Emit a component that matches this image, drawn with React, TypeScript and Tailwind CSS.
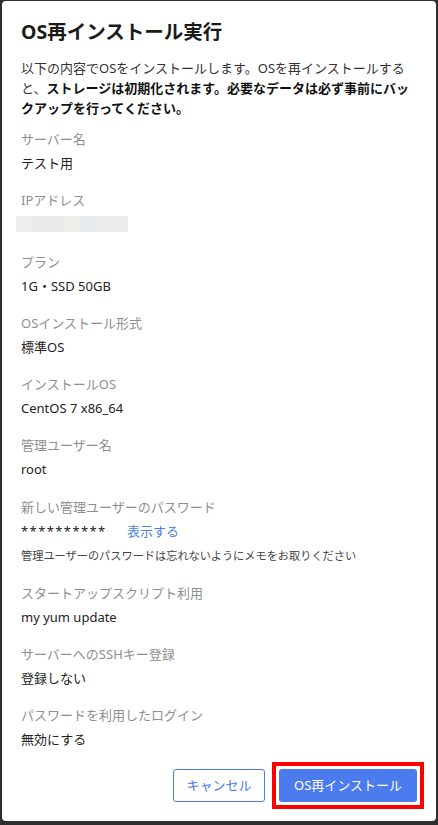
// App.tsx
// OS reinstall confirmation dialog: summary of settings plus cancel / confirm buttons.

type Row = {
    label: string;
    value?: string;
};

const rowsTop: Row[] = [
    { label: "サーバー名", value: "テスト用" },
    { label: "IPアドレス" },
    { label: "プラン", value: "1G・SSD 50GB" },
    { label: "OSインストール形式", value: "標準OS" },
    { label: "インストールOS", value: "CentOS 7 x86_64" },
    { label: "管理ユーザー名", value: "root" },
];

const rowsBottom: Row[] = [
    { label: "スタートアップスクリプト利用", value: "my yum update" },
    { label: "サーバーへのSSHキー登録", value: "登録しない" },
    { label: "パスワードを利用したログイン", value: "無効にする" },
];

// Blurred-out IP address placeholder
function MaskedValue() {
    return (
        <div className="flex h-5 items-center -ml-[5px]">
            <div className="flex h-4">
                <div className="w-4 bg-[#efefef]" />
                <div className="w-[31px] bg-[#eaeaea]" />
                <div className="w-[17px] bg-[#eeeeec]" />
                <div className="w-4 bg-[#e8e9ec]" />
                <div className="w-8 bg-[#ececec]" />
            </div>
        </div>
    );
}

function Field({ row }: { row: Row }) {
    return (
        <div className="mb-[17.3px]">
            <div className="text-[13px] leading-5 text-[#8f8f8f] mb-1">{row.label}</div>
            {row.value ? (
                <div className="text-[13px] leading-5 text-[#222]">{row.value}</div>
            ) : (
                <MaskedValue />
            )}
        </div>
    );
}

export default function App() {
    return (
        <div
            className="w-[438px] h-[825px] bg-[#2e2e2e] pt-px pb-1 px-[2px]"
            style={{ fontFamily: '"Noto Sans", "Noto Sans CJK JP", sans-serif' }}
        >
            <div className="h-full bg-white rounded-[4px] px-[19px] pt-[17px] flex flex-col">
                {/* Title */}
                <h1 className="text-[19.5px] leading-7 font-bold text-[#1a1a1a]">OS再インストール実行</h1>

                {/* Description */}
                <div className="mt-3 text-[13px] leading-5 text-[#333]">
                    以下の内容でOSをインストールします。OSを再インストールすると、<b className="font-bold text-[#111]">ストレージは初期化されます。必要なデータは必ず事前にバックアップを行ってください。</b>
                </div>

                <div className="mt-[11px]">
                    {rowsTop.map((row) => (
                        <Field key={row.label} row={row} />
                    ))}

                    {/* Password with reveal link */}
                    <div className="mb-[18px]">
                        <div className="text-[13px] leading-5 text-[#8f8f8f] mb-1">新しい管理ユーザーのパスワード</div>
                        <div className="flex items-center text-[13px] leading-5">
                            <span className="text-[#222] w-[106px] tracking-[1.4px]">**********</span>
                            <span className="text-[#4a7fe8]">表示する</span>
                        </div>
                        <div className="mt-[6px] text-[11.2px] leading-[18px] text-[#444]">
                            管理ユーザーのパスワードは忘れないようにメモをお取りください
                        </div>
                    </div>

                    {rowsBottom.map((row) => (
                        <Field key={row.label} row={row} />
                    ))}
                </div>

                {/* Actions */}
                <div className="mt-auto mb-[19px] flex justify-end items-center gap-[14px]">
                    <button className="w-[92px] h-[33px] rounded-[3px] border border-[#4b7bec] text-[13px] text-[#4b7bec] bg-white">
                        キャンセル
                    </button>
                    <div className="-m-[7px] border-4 border-[#ff0000] p-[3px]">
                        <button className="block w-[138px] h-[33px] rounded-[3px] bg-[#4b7bec] text-[13px] text-white">
                            OS再インストール
                        </button>
                    </div>
                </div>
            </div>
        </div>
    );
}
